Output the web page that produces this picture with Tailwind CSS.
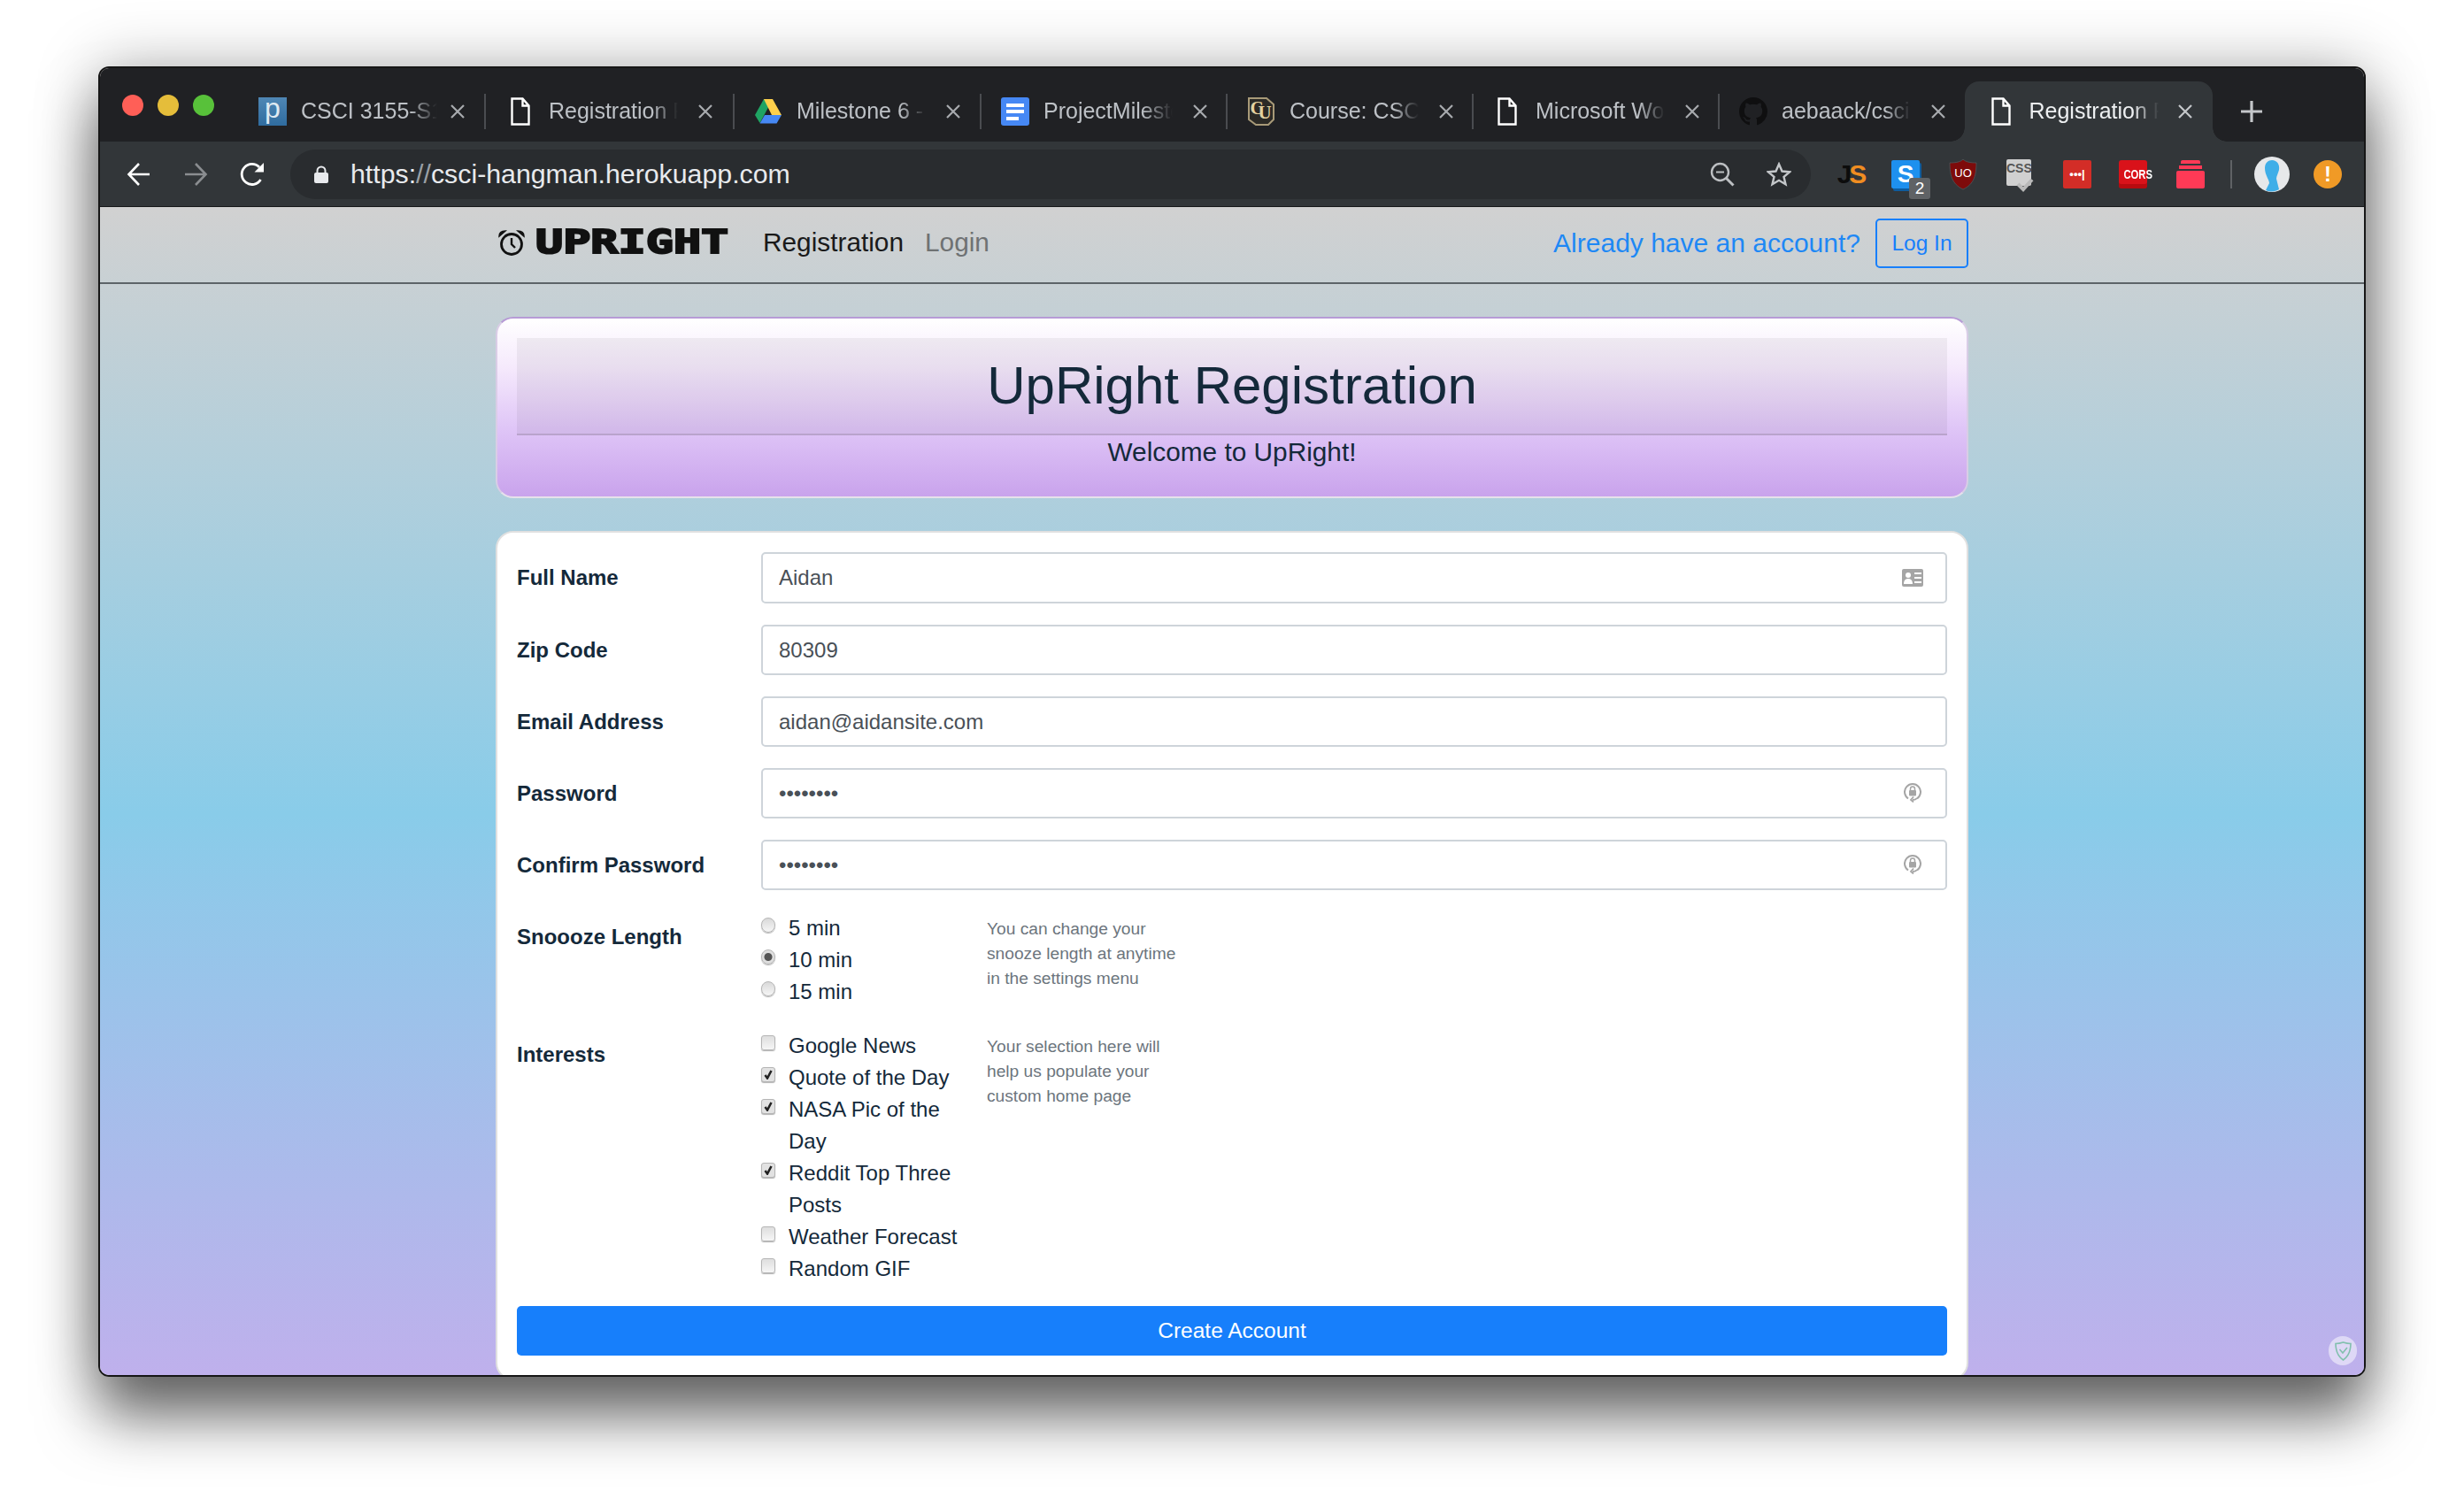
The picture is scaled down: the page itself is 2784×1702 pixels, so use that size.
<!DOCTYPE html>
<html lang="en">
<head>
  <meta charset="UTF-8" />
  <title>UpRight Registration</title>
  <script src="https://cdn.jsdelivr.net/npm/@tailwindcss/browser@4"></script>
</head>
<body class="bg-white font-['Liberation_Sans',Arial,sans-serif] overflow-hidden h-[1702px]">
<div class="pt-[75px] pl-[111px]">
  <!-- Browser window -->
  <div class="w-[2562px] h-[1481px] rounded-[12px] border-2 border-[#161616] overflow-hidden flex flex-col shadow-[0_46px_66px_rgba(0,0,0,0.55),0_0_70px_rgba(0,0,0,0.28)]">

    <!-- Tab strip -->
    <div class="h-[83px] bg-[#202124] flex items-end shrink-0">
      <div class="w-[157px] h-[68px] flex gap-4 pl-[25px] pt-[15px] shrink-0 self-end">
        <span class="w-6 h-6 rounded-full bg-[#ff5f57]"></span>
        <span class="w-6 h-6 rounded-full bg-[#e5bd3a]"></span>
        <span class="w-6 h-6 rounded-full bg-[#58c13a]"></span>
      </div>

      <!-- tab 1 -->
      <div class="w-[279px] h-[68px] flex items-center shrink-0">
        <span class="ml-[22px] w-8 h-8 overflow-hidden bg-gradient-to-b from-[#4f87b5] to-[#2f6c9f] text-[#dfe9f2] text-[32px] leading-[24px] text-center">p</span>
        <span class="ml-4 w-[154px] overflow-hidden whitespace-nowrap text-[25px] text-[#bdc1c6] [mask-image:linear-gradient(90deg,#000_80%,transparent)]">CSCI 3155-S19 Introduction</span>
        <svg class="ml-[13px] w-5 h-5" viewBox="0 0 20 20"><path d="M3 3l14 14M17 3L3 17" stroke="#a8abaf" stroke-width="2.2"/></svg>
        <span class="ml-auto w-0.5 h-10 bg-[#4a4c50]"></span>
      </div>
      <!-- tab 2 -->
      <div class="w-[281px] h-[68px] flex items-center shrink-0">
        <svg class="ml-[28px] w-[22px] h-8" viewBox="0 0 22 32" fill="none"><path d="M1.500 1.500h12l7 8v21h-19zM13.500 1.500v8h7" stroke="#fff" stroke-width="2.4"/></svg>
        <span class="ml-[21px] w-[146px] overflow-hidden whitespace-nowrap text-[25px] text-[#bdc1c6] [mask-image:linear-gradient(90deg,#000_80%,transparent)]">Registration Page</span>
        <svg class="ml-[21px] w-5 h-5" viewBox="0 0 20 20"><path d="M3 3l14 14M17 3L3 17" stroke="#a8abaf" stroke-width="2.2"/></svg>
        <span class="ml-auto w-0.5 h-10 bg-[#4a4c50]"></span>
      </div>
      <!-- tab 3 -->
      <div class="w-[279px] h-[68px] flex items-center shrink-0">
        <svg class="ml-[22px] w-8 h-8" viewBox="0 0 32 32"><path d="M11 2h10L12 19 6.500 29 1 20z" fill="#1fa463"/><path d="M21 2l10 18H20L11 2z" fill="#ffd04b"/><path d="M12 20h19l-5.500 9.500H6.500z" fill="#4688f4"/></svg>
        <span class="ml-4 w-[146px] overflow-hidden whitespace-nowrap text-[25px] text-[#bdc1c6] [mask-image:linear-gradient(90deg,#000_80%,transparent)]">Milestone 6 - Requirements</span>
        <svg class="ml-[21px] w-5 h-5" viewBox="0 0 20 20"><path d="M3 3l14 14M17 3L3 17" stroke="#a8abaf" stroke-width="2.2"/></svg>
        <span class="ml-auto w-0.5 h-10 bg-[#4a4c50]"></span>
      </div>
      <!-- tab 4 -->
      <div class="w-[278px] h-[68px] flex items-center shrink-0">
        <svg class="ml-[22px] w-8 h-8" viewBox="0 0 32 32"><rect width="32" height="32" rx="3" fill="#4688f4"/><path d="M6 7h20v4H6zM6 14h20v4H6zM6 22h14v4H6z" fill="#fff"/></svg>
        <span class="ml-4 w-[146px] overflow-hidden whitespace-nowrap text-[25px] text-[#bdc1c6] [mask-image:linear-gradient(90deg,#000_76%,transparent)]">ProjectMilestone6</span>
        <svg class="ml-[21px] w-5 h-5" viewBox="0 0 20 20"><path d="M3 3l14 14M17 3L3 17" stroke="#a8abaf" stroke-width="2.2"/></svg>
        <span class="ml-auto w-0.5 h-10 bg-[#4a4c50]"></span>
      </div>
      <!-- tab 5 -->
      <div class="w-[278px] h-[68px] flex items-center shrink-0">
        <svg class="ml-[22px] w-8 h-8" viewBox="0 0 32 32"><path d="M2 1h20l8 7v17l-6 6H10l-8-6z" fill="#2b2a26" stroke="#a89a78" stroke-width="2"/><text x="11" y="19" font-family="Liberation Serif" font-weight="700" font-size="21" fill="#e3d2a0" text-anchor="middle">C</text><text x="20" y="24" font-family="Liberation Serif" font-weight="700" font-size="21" fill="#e3d2a0" text-anchor="middle">U</text></svg>
        <span class="ml-4 w-[146px] overflow-hidden whitespace-nowrap text-[25px] text-[#bdc1c6] [mask-image:linear-gradient(90deg,#000_80%,transparent)]">Course: CSCI 3155</span>
        <svg class="ml-[21px] w-5 h-5" viewBox="0 0 20 20"><path d="M3 3l14 14M17 3L3 17" stroke="#a8abaf" stroke-width="2.2"/></svg>
        <span class="ml-auto w-0.5 h-10 bg-[#4a4c50]"></span>
      </div>
      <!-- tab 6 -->
      <div class="w-[278px] h-[68px] flex items-center shrink-0">
        <svg class="ml-[27px] w-[22px] h-8" viewBox="0 0 22 32" fill="none"><path d="M1.500 1.500h12l7 8v21h-19zM13.500 1.500v8h7" stroke="#fff" stroke-width="2.4"/></svg>
        <span class="ml-[21px] w-[146px] overflow-hidden whitespace-nowrap text-[25px] text-[#bdc1c6] [mask-image:linear-gradient(90deg,#000_80%,transparent)]">Microsoft Word</span>
        <svg class="ml-[21px] w-5 h-5" viewBox="0 0 20 20"><path d="M3 3l14 14M17 3L3 17" stroke="#a8abaf" stroke-width="2.2"/></svg>
        <span class="ml-auto w-0.5 h-10 bg-[#4a4c50]"></span>
      </div>
      <!-- tab 7 -->
      <div class="w-[276.500px] h-[68px] flex items-center shrink-0">
        <svg class="ml-[22px] w-8 h-8" viewBox="0 0 16 16"><path fill="#0f0f10" d="M8 0C3.580 0 0 3.580 0 8c0 3.540 2.290 6.530 5.470 7.590.4.070.55-.17.55-.38 0-.19-.01-.82-.01-1.490-2.010.37-2.530-.49-2.690-.94-.09-.23-.48-.94-.82-1.130-.28-.15-.68-.52-.01-.53.63-.01 1.080.58 1.230.82.72 1.210 1.870.87 2.330.66.07-.52.28-.87.51-1.070-1.780-.2-3.640-.89-3.640-3.950 0-.87.31-1.590.82-2.150-.08-.2-.36-1.020.08-2.120 0 0 .67-.21 2.200.82.64-.18 1.320-.27 2-.27s1.360.09 2 .27c1.530-1.040 2.200-.82 2.200-.82.44 1.100.16 1.920.08 2.120.51.56.82 1.270.82 2.150 0 3.070-1.870 3.750-3.650 3.950.29.250.54.730.54 1.480 0 1.070-.01 1.930-.01 2.200 0 .21.150.460.550.380A8.010 8.010 0 0 0 16 8c0-4.420-3.580-8-8-8z"/></svg>
        <span class="ml-4 w-[146px] overflow-hidden whitespace-nowrap text-[25px] text-[#bdc1c6] [mask-image:linear-gradient(90deg,#000_80%,transparent)]">aebaack/csci3155</span>
        <svg class="ml-[21px] w-5 h-5" viewBox="0 0 20 20"><path d="M3 3l14 14M17 3L3 17" stroke="#a8abaf" stroke-width="2.2"/></svg>
      </div>
      <!-- active tab -->
      <div class="relative w-[280px] h-[68px] flex items-center shrink-0 bg-[#323639] rounded-t-[16px]">
        <span class="absolute -left-4 bottom-0 w-4 h-4 bg-[radial-gradient(circle_at_0_0,transparent_15.500px,#323639_16px)]"></span>
        <span class="absolute -right-4 bottom-0 w-4 h-4 bg-[radial-gradient(circle_at_100%_0,transparent_15.500px,#323639_16px)]"></span>
        <svg class="ml-[30px] w-[22px] h-8" viewBox="0 0 22 32" fill="none"><path d="M1.500 1.500h12l7 8v21h-19zM13.500 1.500v8h7" stroke="#fff" stroke-width="2.4"/></svg>
        <span class="ml-[21px] w-[146px] overflow-hidden whitespace-nowrap text-[25px] text-[#eef0f2] [mask-image:linear-gradient(90deg,#000_80%,transparent)]">Registration Page</span>
        <svg class="ml-[20px] w-5 h-5" viewBox="0 0 20 20"><path d="M3 3l14 14M17 3L3 17" stroke="#c4c7ca" stroke-width="2.2"/></svg>
      </div>
      <svg class="ml-[32px] mb-[22px] w-6 h-6" viewBox="0 0 24 24"><path d="M12 0v24M0 12h24" stroke="#c4c7ca" stroke-width="3.200"/></svg>
    </div>

    <!-- Toolbar -->
    <div class="h-[74px] bg-[#323639] border-b border-[#17181a] flex items-center shrink-0">
      <svg class="ml-[30px] w-7 h-7" viewBox="0 0 28 28" fill="none"><path d="M26 14H3M14 2L2.500 14 14 26" stroke="#fff" stroke-width="2.600"/></svg>
      <svg class="ml-[36px] w-7 h-7" viewBox="0 0 28 28" fill="none"><path d="M2 14h23M14 2l11.500 12L14 26" stroke="#8a8d90" stroke-width="2.600"/></svg>
      <svg class="ml-[36px] w-7 h-7" viewBox="0 0 28 28" fill="none"><path d="M23.500 20A11.500 11.500 0 1 1 22 6" stroke="#fff" stroke-width="2.800"/><path d="M27 1v10.500H16.500z" fill="#fff"/></svg>

      <!-- address bar -->
      <div class="ml-[29px] w-[1718px] h-14 rounded-full bg-[#292c2f] flex items-center shrink-0">
        <svg class="ml-[27px] w-4 h-5" viewBox="0 0 16 20"><path d="M3.500 9V6a4.500 4.500 0 0 1 9 0v3" fill="none" stroke="#e8eaed" stroke-width="2"/><rect y="8" width="16" height="12" rx="2" fill="#e8eaed"/></svg>
        <span class="ml-[25px] text-[30.300px] text-[#e8eaed]">https:<span class="text-[#9aa0a6]">//</span>csci-hangman.herokuapp.com</span>
        <svg class="ml-auto w-7 h-7" viewBox="0 0 28 28" fill="none"><circle cx="11.500" cy="11.500" r="9.500" stroke="#bcbfc2" stroke-width="2.400"/><path d="M18.500 18.500l8 8" stroke="#bcbfc2" stroke-width="3"/><path d="M7 11.500h9" stroke="#bcbfc2" stroke-width="2"/></svg>
        <svg class="ml-[36px] mr-[22px] w-7 h-7" viewBox="0 0 28 28" fill="none"><path d="M14 2.500l3.500 8 8.500.8-6.500 5.600 2 8.400L14 20.800 6.500 25.300l2-8.400L2 11.300l8.500-.8z" stroke="#c4c7ca" stroke-width="2.400"/></svg>
      </div>

      <!-- extensions -->
      <div class="ml-[28px] w-[34px] h-8 flex items-center justify-center font-black text-[30px] leading-none tracking-[-3px] shrink-0"><span class="text-[#0c0c0c]">J</span><span class="text-[#f08d21]">S</span></div>
      <div class="relative ml-[29px] w-8 h-8 bg-[#1e90ee] rounded-[2px] shadow-[2px_3px_0_#0e5c9e] text-white font-bold text-[28px] leading-8 text-center shrink-0">S
        <span class="absolute left-[20px] top-[20px] w-6 h-6 rounded-[3px] bg-[#5f6265] text-[19px] leading-6 font-normal">2</span>
      </div>
      <svg class="ml-[33px] w-8 h-9 shrink-0" viewBox="0 0 32 36"><path d="M16 1c3 3 8 4 15 4 0 13-2 24-15 30C3 29 1 18 1 5c7 0 12-1 15-4z" fill="#7e0b0b" stroke="#4d4f52" stroke-width="1"/><text x="16" y="21" font-family="Liberation Sans" font-size="13" fill="#fff" text-anchor="middle">UO</text></svg>
      <div class="relative ml-[33px] w-7 h-[30px] -mt-1 bg-[#d0d0d0] rounded-[2px] text-[#555] text-[14px] font-bold leading-5 text-center shrink-0">CSS
        <svg class="absolute -right-[3px] -bottom-[7px] w-[20px] h-[16px]" viewBox="0 0 20 16" fill="none"><path d="M2 7l6 6L18 2" stroke="#b9b9b9" stroke-width="4"/></svg>
      </div>
      <div class="ml-[36px] w-8 h-8 bg-[#d32d27] rounded-[2px] text-white text-[13px] leading-8 text-center font-bold shrink-0 whitespace-nowrap">•••|</div>
      <div class="ml-[31px] w-8 h-8 bg-[#d9121a] rounded-[3px] text-white text-[15px] leading-8 text-center font-bold shrink-0 shadow-[inset_0_-5px_0_rgba(120,0,0,0.35)]"><span class="inline-block scale-x-[0.75]">CORS</span></div>
      <div class="ml-[33px] w-8 h-8 flex flex-col items-center gap-[2px] shrink-0">
        <span class="w-[22px] h-[4px] rounded-t-[2px] bg-[#ff3a56]"></span>
        <span class="w-[26px] h-[4px] bg-[#ff3a56]"></span>
        <span class="w-8 h-5 rounded-[2px] bg-[#ff3a56]"></span>
      </div>
      <span class="ml-[29px] w-0.5 h-8 bg-[#5f6265] shrink-0"></span>
      <svg class="ml-[25px] w-10 h-10 shrink-0" viewBox="0 0 40 40"><circle cx="20" cy="20" r="20" fill="#e6e8ea"/><path d="M12 13c0-6 4-9 8-9 6 0 9 5 8 11-1 4-3 7-3 10l3 12c-4 3-12 3-15 1l4-8c0-4-5-9-5-17z" fill="#3eaee8"/></svg>
      <div class="ml-[27px] w-8 h-8 rounded-full bg-[#f09a26] text-white text-[24px] font-bold leading-8 text-center shrink-0">!</div>
    </div>

    <!-- Page -->
    <div class="relative flex-1 min-h-0 overflow-hidden bg-[linear-gradient(180deg,#d1d1d1_0%,#89cce9_52%,#bfb0ec_100%)]">
      <!-- Navbar -->
      <nav class="h-[87px] border-b-2 border-[#5d6468]">
        <div class="w-[1664px] mx-auto h-[85px] pb-[3px] flex items-center">
          <svg class="ml-0.5 -mt-[3px] w-8 h-8 shrink-0" viewBox="0 0 32 32" fill="none"><circle cx="16" cy="18" r="11.500" stroke="#111" stroke-width="2.800"/><path d="M16 11v7l4 4" stroke="#111" stroke-width="2.400"/><path d="M2 9c0-4 3-6 7-6zM30 9c0-4-3-6-7-6z" fill="#111" stroke="#111" stroke-width="1.500"/></svg>
          <span class="ml-[11px] -mt-[3px] w-[219px] text-[37px] font-bold leading-none text-[#111] font-['DejaVu_Sans_Mono',monospace] [-webkit-text-stroke:2px_#111] scale-x-[1.4] origin-left whitespace-nowrap">UPRIGHT</span>
          <span class="ml-[38px] -mt-[2px] text-[29.800px] text-[#1a1a1a]">Registration</span>
          <span class="ml-[24px] -mt-[2px] text-[29.800px] text-[#6f7273]">Login</span>
          <span class="ml-auto -mt-[2px] text-[30px] text-[#1e88f5]">Already have an account?</span>
          <button class="ml-[17px] w-[105px] h-[56px] border-2 border-[#177ffb] rounded-[5px] text-[24.500px] text-[#177ffb]">Log In</button>
        </div>
      </nav>

      <main class="w-[1664px] mx-auto pt-[37px]">
        <!-- Heading card -->
        <section class="h-[205px] rounded-[20px] border-2 border-[#d9cde6] border-t-[#b79bd6] border-b-[#e6e1eb] bg-[linear-gradient(180deg,#ffffff_0%,#f5e9fc_28%,#dfc5f7_62%,#c9a3ec_100%)] px-[22px] pt-[22px] text-center text-[#14293a]">
          <div class="h-[110px] bg-black/5 border-b-2 border-[#b9a3cc]">
            <h1 class="text-[60px] leading-[108px]">UpRight Registration</h1>
          </div>
          <p class="text-[29.800px] leading-[38px]">Welcome to UpRight!</p>
        </section>

        <!-- Form card -->
        <form class="h-[960px] mt-[37px] rounded-[20px] border-2 border-[#e0e0e0] bg-white px-[22px] pt-[22px] text-[#14293a]">
          <div class="flex items-center mb-6">
            <label class="w-[276px] text-[24px] font-bold">Full Name</label>
            <div class="relative flex-1">
              <input class="w-full h-[58px] px-[18px] border-2 border-[#ced4da] rounded-[5px] text-[24px] text-[#495057] bg-white" value="Aidan" />
              <svg class="absolute right-[27px] top-[19px] w-6 h-5" viewBox="0 0 24 20"><rect width="24" height="20" rx="2" fill="#a5a5a5"/><circle cx="7" cy="7" r="3" fill="#fff"/><path d="M2 17c0-4 2-6 5-6s5 2 5 6zM14 4h8v2h-8zM14 9h8v2h-8zM14 14h8v2h-8z" fill="#fff"/></svg>
            </div>
          </div>
          <div class="flex items-center mb-6">
            <label class="w-[276px] text-[24px] font-bold">Zip Code</label>
            <input class="flex-1 h-[57px] px-[18px] border-2 border-[#ced4da] rounded-[5px] text-[24px] text-[#495057] bg-white" value="80309" />
          </div>
          <div class="flex items-center mb-6">
            <label class="w-[276px] text-[24px] font-bold">Email Address</label>
            <input class="flex-1 h-[57px] px-[18px] border-2 border-[#ced4da] rounded-[5px] text-[24px] text-[#495057] bg-white" value="aidan@aidansite.com" />
          </div>
          <div class="flex items-center mb-6">
            <label class="w-[276px] text-[24px] font-bold">Password</label>
            <div class="relative flex-1">
              <input type="password" class="w-full h-[57px] px-[18px] border-2 border-[#ced4da] rounded-[5px] text-[24px] text-[#495057] bg-white" value="aidan123" />
              <svg class="absolute right-[29px] top-[15px] w-5 h-6" viewBox="0 0 20 24" fill="none"><path d="M5 19.500A9 9 0 1 1 15 19.500" stroke="#a5a5a5" stroke-width="2"/><path d="M7.500 10V8.500a2.500 2.500 0 0 1 5 0V10" stroke="#a5a5a5" stroke-width="1.500"/><rect x="6" y="10" width="8" height="6.500" rx="1" fill="#a5a5a5"/><path d="M15 19c-1 1.500-3 2-5 2M11 17.500L8 21l3 2.500" stroke="#a5a5a5" stroke-width="1.800"/></svg>
            </div>
          </div>
          <div class="flex items-center mb-6">
            <label class="w-[276px] text-[24px] font-bold">Confirm Password</label>
            <div class="relative flex-1">
              <input type="password" class="w-full h-[57px] px-[18px] border-2 border-[#ced4da] rounded-[5px] text-[24px] text-[#495057] bg-white" value="aidan123" />
              <svg class="absolute right-[29px] top-[15px] w-5 h-6" viewBox="0 0 20 24" fill="none"><path d="M5 19.500A9 9 0 1 1 15 19.500" stroke="#a5a5a5" stroke-width="2"/><path d="M7.500 10V8.500a2.500 2.500 0 0 1 5 0V10" stroke="#a5a5a5" stroke-width="1.500"/><rect x="6" y="10" width="8" height="6.500" rx="1" fill="#a5a5a5"/><path d="M15 19c-1 1.500-3 2-5 2M11 17.500L8 21l3 2.500" stroke="#a5a5a5" stroke-width="1.800"/></svg>
            </div>
          </div>

          <!-- Snooze -->
          <div class="flex mt-px mb-6">
            <div class="w-[276px] pt-[11px] text-[24px] leading-9 font-bold">Snoooze Length</div>
            <div class="w-[255px] pt-px text-[24px] leading-9">
              <div class="flex"><span class="mt-[6px] w-4 h-[17px] rounded-full border border-[#b5b5b5] bg-gradient-to-b from-[#d9d9d9] to-[#f6f6f6] shadow-[0_1px_1px_rgba(0,0,0,0.3)] shrink-0"></span><span class="ml-[15px]">5 min</span></div>
              <div class="flex"><span class="mt-[6px] w-4 h-[17px] rounded-full border border-[#b5b5b5] bg-[radial-gradient(circle,#555_0_4px,#dedede_5px)] shadow-[0_1px_1px_rgba(0,0,0,0.3)] shrink-0"></span><span class="ml-[15px]">10 min</span></div>
              <div class="flex"><span class="mt-[6px] w-4 h-[17px] rounded-full border border-[#b5b5b5] bg-gradient-to-b from-[#d9d9d9] to-[#f6f6f6] shadow-[0_1px_1px_rgba(0,0,0,0.3)] shrink-0"></span><span class="ml-[15px]">15 min</span></div>
            </div>
            <p class="w-[225px] pt-1.5 text-[19.200px] leading-[28px] text-[#6c757d]">You can change your snooze length at anytime in the settings menu</p>
          </div>

          <!-- Interests -->
          <div class="flex mb-[24px]">
            <div class="w-[276px] pt-[11px] text-[24px] leading-9 font-bold">Interests</div>
            <div class="w-[255px] pt-px pr-[25px] text-[24px] leading-9">
              <div class="flex"><span class="mt-[6px] w-4 h-[17px] rounded-[3px] border border-[#b5b5b5] bg-gradient-to-b from-[#dedede] to-[#f6f6f6] shadow-[0_1px_1px_rgba(0,0,0,0.3)] shrink-0"></span><span class="ml-[15px]">Google News</span></div>
              <div class="flex"><span class="relative mt-[6px] w-4 h-[17px] rounded-[3px] border border-[#b5b5b5] bg-[#e2e2e2] shadow-[0_1px_1px_rgba(0,0,0,0.3)] shrink-0"><svg class="absolute left-0.5 top-0.5 w-[10px] h-[11px]" viewBox="0 0 10 11" fill="none"><path d="M1.500 6l2.500 3.500L8.500 1" stroke="#222" stroke-width="2.600"/></svg></span><span class="ml-[15px]">Quote of the Day</span></div>
              <div class="flex"><span class="relative mt-[6px] w-4 h-[17px] rounded-[3px] border border-[#b5b5b5] bg-[#e2e2e2] shadow-[0_1px_1px_rgba(0,0,0,0.3)] shrink-0"><svg class="absolute left-0.5 top-0.5 w-[10px] h-[11px]" viewBox="0 0 10 11" fill="none"><path d="M1.500 6l2.500 3.500L8.500 1" stroke="#222" stroke-width="2.600"/></svg></span><span class="ml-[15px]">NASA Pic of the Day</span></div>
              <div class="flex"><span class="relative mt-[6px] w-4 h-[17px] rounded-[3px] border border-[#b5b5b5] bg-[#e2e2e2] shadow-[0_1px_1px_rgba(0,0,0,0.3)] shrink-0"><svg class="absolute left-0.5 top-0.5 w-[10px] h-[11px]" viewBox="0 0 10 11" fill="none"><path d="M1.500 6l2.500 3.500L8.500 1" stroke="#222" stroke-width="2.600"/></svg></span><span class="ml-[15px]">Reddit Top Three Posts</span></div>
              <div class="flex"><span class="mt-[6px] w-4 h-[17px] rounded-[3px] border border-[#b5b5b5] bg-gradient-to-b from-[#dedede] to-[#f6f6f6] shadow-[0_1px_1px_rgba(0,0,0,0.3)] shrink-0"></span><span class="ml-[15px]">Weather Forecast</span></div>
              <div class="flex"><span class="mt-[6px] w-4 h-[17px] rounded-[3px] border border-[#b5b5b5] bg-gradient-to-b from-[#dedede] to-[#f6f6f6] shadow-[0_1px_1px_rgba(0,0,0,0.3)] shrink-0"></span><span class="ml-[15px]">Random GIF</span></div>
            </div>
            <p class="w-[225px] pt-1.5 text-[19.200px] leading-[28px] text-[#6c757d]">Your selection here will help us populate your custom home page</p>
          </div>

          <button type="button" class="w-full h-14 rounded-[5px] bg-[#177ffb] text-white text-[24.500px]">Create Account</button>
        </form>
      </main>

      <!-- floating adblock badge -->
      <div class="absolute right-[8px] bottom-[11px] w-8 h-[33px] rounded-full bg-white/50 flex items-center justify-center">
        <svg class="w-[19px] h-[22px]" viewBox="0 0 19 22" fill="none"><path d="M9.500 1c3 1 5.500 1.500 8.500 1.500 0 8-2 14-8.500 18.500C3 16.500 1 10.500 1 2.500 4 2.500 6.500 2 9.500 1z" stroke="#82c0ae" stroke-width="1.600"/><path d="M5.500 9l3.500 4 5-6" stroke="#82c0ae" stroke-width="1.600"/></svg>
      </div>
    </div>
  </div>
</div>
</body>
</html>
